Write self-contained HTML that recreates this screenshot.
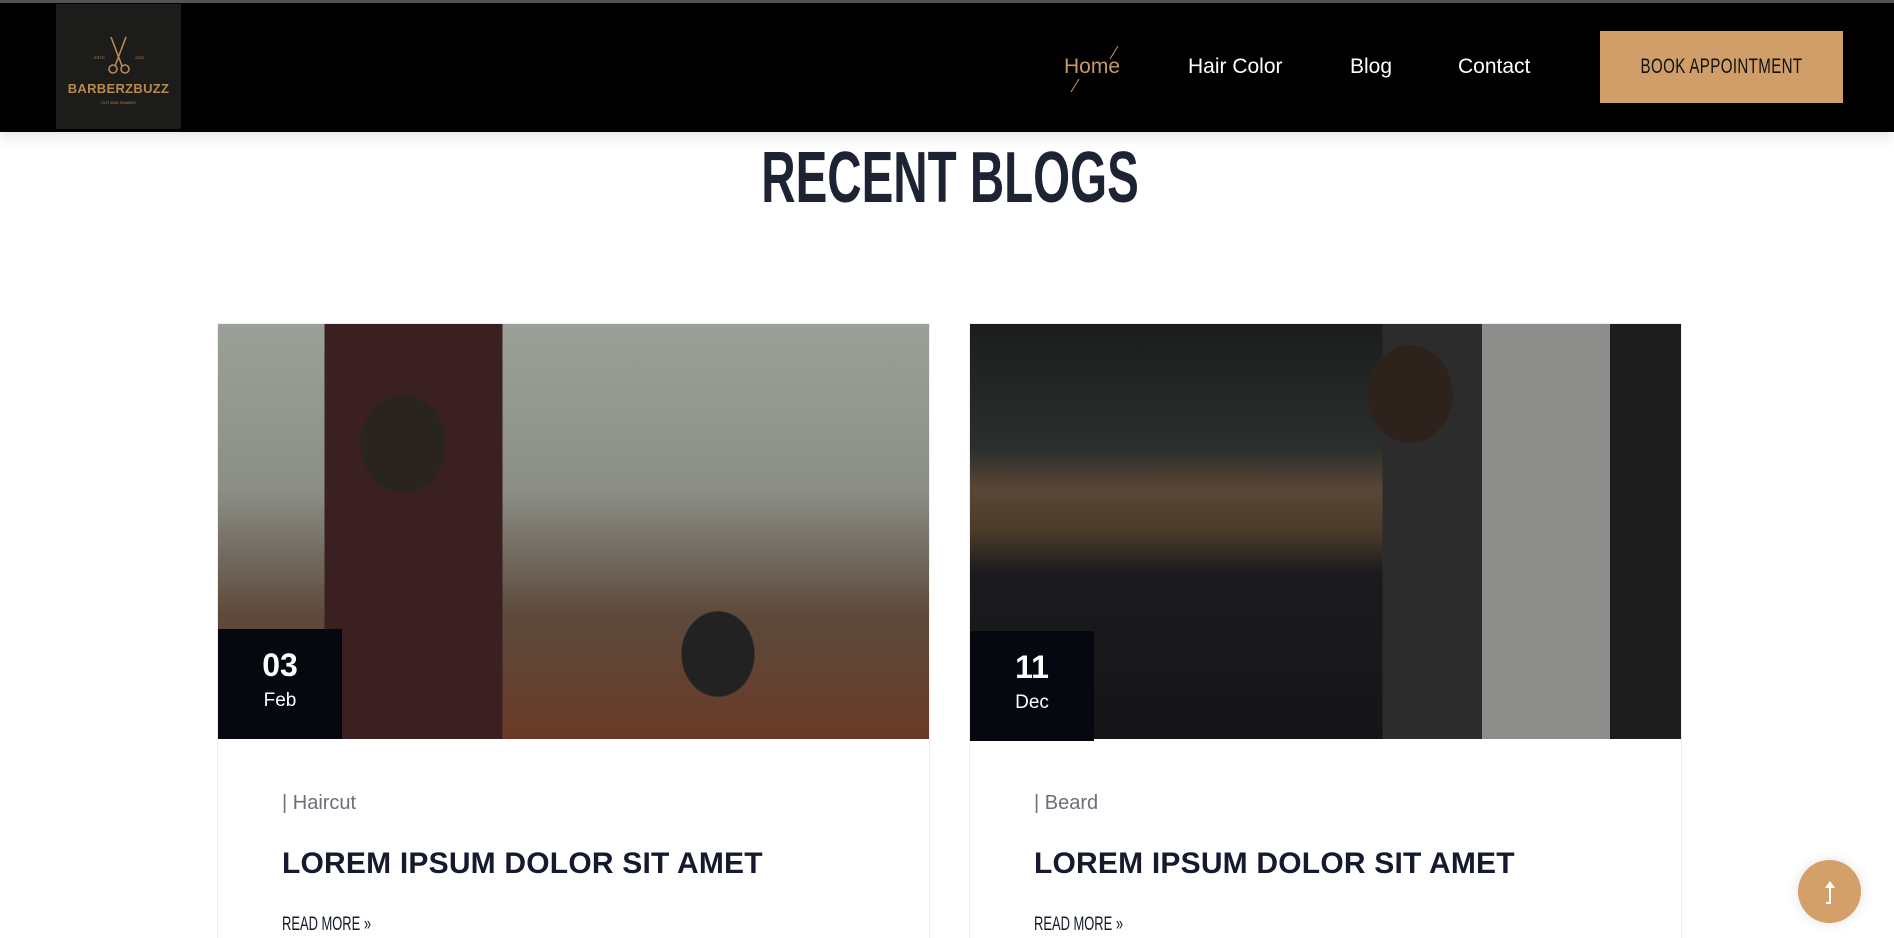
<!DOCTYPE html>
<html><head><meta charset="utf-8">
<style>
*{margin:0;padding:0;box-sizing:border-box}
html,body{width:1894px;height:938px;overflow:hidden}
body{background:#fff;font-family:"Liberation Sans",sans-serif;position:relative}
.topbar{position:absolute;left:0;top:0;width:1894px;height:3px;background:#555}
header{position:absolute;left:0;top:3px;width:1894px;height:129px;background:#000;box-shadow:0 4px 14px rgba(0,0,0,.12);z-index:2}
.logo{position:absolute;left:56px;top:1px;width:125px;height:125px;background:#1c1c1b;text-align:center;color:#b8894f}
.logo .name{position:absolute;left:0;right:0;top:77px;font-size:13px;font-weight:bold;letter-spacing:.3px}
.logo .sub{position:absolute;left:0;right:0;top:96px;font-size:4px}
.nav a{position:absolute;top:52px;font-size:21px;color:#fff;text-decoration:none}
.btn{position:absolute;left:1600px;top:28px;width:243px;height:72px;background:#d09e68;color:#111;font-size:21px;text-align:center;line-height:72px;letter-spacing:.5px}
.btn span{display:inline-block;transform:scaleX(.72)}
h1{position:absolute;left:0;width:1900px;top:143px;text-align:center;font-size:72px;font-weight:bold;color:#1d2333;line-height:70px}
h1 span{display:inline-block;transform:scaleX(.66)}
.card{position:absolute;top:323px;width:713px;height:640px;border:1px solid #eee;background:#fff}
.img{position:absolute;left:0;top:0;width:100%;height:415px}
.date{position:absolute;left:0;top:305px;width:124px;height:110px;background:#05080f;color:#fff;text-align:center}
.date b{display:block;margin-top:18px;font-size:32px}
.date i{display:block;font-style:normal;font-size:19px;margin-top:6px}
.cat{position:absolute;left:64px;top:468px;font-size:20px;color:#6b6f7a}
.title{position:absolute;left:64px;top:523px;font-size:30px;font-weight:bold;color:#151a2e;letter-spacing:.2px}
.more{position:absolute;left:64px;top:590px;font-size:19px;color:#151a2e;transform:scaleX(.68);transform-origin:left}
.up{position:absolute;left:1798px;top:860px;width:63px;height:63px;border-radius:50%;background:#d4a06a;box-shadow:0 0 12px rgba(0,0,0,.12)}
</style></head><body>
<div class="topbar"></div>
<header>
 <div class="logo">
  <svg width="125" height="75" viewBox="0 0 125 75" style="position:absolute;left:0;top:0"><g stroke="#b8894f" stroke-width="1.6" fill="none"><path d="M55 33 L66 62 M70 33 L59 62"/><circle cx="57" cy="65" r="4"/><circle cx="69" cy="65" r="4"/></g><text x="38" y="55" font-size="4" fill="#b8894f" font-family="Liberation Sans">ESTD</text><text x="79" y="55" font-size="4" fill="#b8894f" font-family="Liberation Sans">2022</text></svg>
  <div class="name">BARBERZBUZZ</div><div class="sub">CUT AND SHAVES</div>
 </div>
 <div class="nav">
  <a style="left:1064px;color:#c79a63">Home</a>
  <svg style="position:absolute;left:1065px;top:38px" width="56" height="56"><path d="M53 5 L45 18 M14 38 L6 51" stroke="#c79a63" stroke-width="1"/></svg>
  <a style="left:1188px">Hair Color</a>
  <a style="left:1350px">Blog</a>
  <a style="left:1458px">Contact</a>
 </div>
 <div class="btn"><span>BOOK APPOINTMENT</span></div>
</header>
<h1><span>RECENT BLOGS</span></h1>

<div class="card" style="left:217px">
 <div class="img" style="background:
  radial-gradient(ellipse 70px 80px at 185px 120px,#2a2420 60%,transparent 62%),
  radial-gradient(ellipse 60px 70px at 500px 330px,#222 60%,transparent 62%),
  linear-gradient(90deg,transparent 0 15%,#3a2020 15% 40%,transparent 40%),
  linear-gradient(180deg,#9aa199 0%,#8b8e86 40%,#5d4a3c 70%,#6a3a26 100%)"></div>
 <div class="date"><b>03</b><i>Feb</i></div>
 <div class="cat">| Haircut</div>
 <div class="title">LOREM IPSUM DOLOR SIT AMET</div>
 <div class="more">READ MORE »</div>
</div>

<div class="card" style="left:969px">
 <div class="img" style="background:
  radial-gradient(ellipse 70px 80px at 440px 70px,#2e221c 60%,transparent 62%),
  linear-gradient(90deg,transparent 0 58%,#2c2c2c 58% 72%,#8d8d8b 72% 90%,#1d1d1d 90%),
  linear-gradient(180deg,#1a1d1c 0%,#2b2f2c 30%,#5a4736 40%,#4a3a2a 50%,#1b1b1d 60%,#151517 100%)"></div>
 <div class="date" style="top:307px"><b>11</b><i>Dec</i></div>
 <div class="cat">| Beard</div>
 <div class="title">LOREM IPSUM DOLOR SIT AMET</div>
 <div class="more">READ MORE »</div>
</div>

<div class="up"><svg width="63" height="63"><path d="M28 44 H33 V28 H37 L32 21 L27 28 H31 V42 H28 Z" fill="#fff"/></svg></div>
</body></html>
